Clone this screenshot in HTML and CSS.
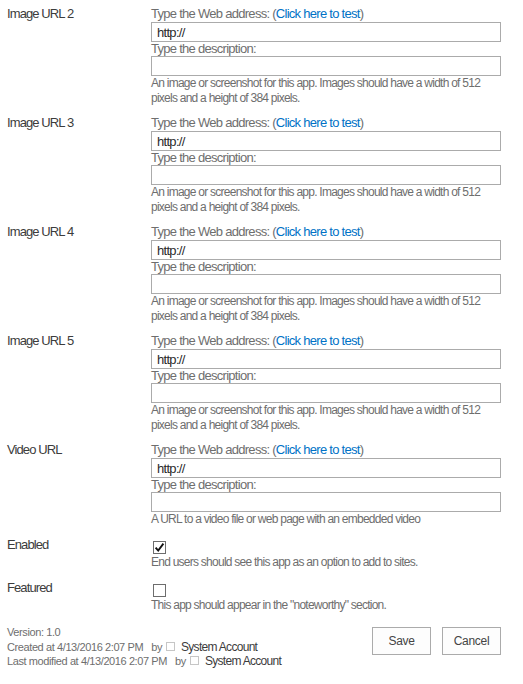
FILE: index.html
```html
<!DOCTYPE html>
<html>
<head>
<meta charset="utf-8">
<link rel="stylesheet" href="styles.css">
</head>
<body>
<div class="form">
  <div class="row">
    <div class="label">Image URL 2</div>
    <div class="field">
      <div class="cap">Type the Web address: (<a class="link" href="#">Click here to test</a>)</div>
      <input class="box" type="text" value="http://">
      <div class="cap2">Type the description:</div>
      <input class="box" type="text" value="">
      <div class="help">An image or screenshot for this app. Images should have a width of 512 pixels and a height of 384 pixels.</div>
    </div>
  </div>
  <div class="row">
    <div class="label">Image URL 3</div>
    <div class="field">
      <div class="cap">Type the Web address: (<a class="link" href="#">Click here to test</a>)</div>
      <input class="box" type="text" value="http://">
      <div class="cap2">Type the description:</div>
      <input class="box" type="text" value="">
      <div class="help">An image or screenshot for this app. Images should have a width of 512 pixels and a height of 384 pixels.</div>
    </div>
  </div>
  <div class="row">
    <div class="label">Image URL 4</div>
    <div class="field">
      <div class="cap">Type the Web address: (<a class="link" href="#">Click here to test</a>)</div>
      <input class="box" type="text" value="http://">
      <div class="cap2">Type the description:</div>
      <input class="box" type="text" value="">
      <div class="help">An image or screenshot for this app. Images should have a width of 512 pixels and a height of 384 pixels.</div>
    </div>
  </div>
  <div class="row">
    <div class="label">Image URL 5</div>
    <div class="field">
      <div class="cap">Type the Web address: (<a class="link" href="#">Click here to test</a>)</div>
      <input class="box" type="text" value="http://">
      <div class="cap2">Type the description:</div>
      <input class="box" type="text" value="">
      <div class="help">An image or screenshot for this app. Images should have a width of 512 pixels and a height of 384 pixels.</div>
    </div>
  </div>
  <div class="row">
    <div class="label">Video URL</div>
    <div class="field">
      <div class="cap">Type the Web address: (<a class="link" href="#">Click here to test</a>)</div>
      <input class="box" type="text" value="http://">
      <div class="cap2">Type the description:</div>
      <input class="box" type="text" value="">
      <div class="help">A URL to a video file or web page with an embedded video</div>
    </div>
  </div>
  <div class="row row-check">
    <div class="label">Enabled</div>
    <div class="field">
      <div class="check-line">
        <svg class="cb" width="13" height="13" viewBox="0 0 13 13"><rect x="0.5" y="0.5" width="12" height="12" fill="#fff" stroke="#6d6d6d"/><path d="M2.6 6.6 L5.2 9.6 L10.4 2.6" fill="none" stroke="#111" stroke-width="1.9"/></svg>
      </div>
      <div class="help">End users should see this app as an option to add to sites.</div>
    </div>
  </div>
  <div class="row row-check">
    <div class="label">Featured</div>
    <div class="field">
      <div class="check-line">
        <svg class="cb" width="13" height="13" viewBox="0 0 13 13"><rect x="0.5" y="0.5" width="12" height="12" fill="#fff" stroke="#6d6d6d"/></svg>
      </div>
      <div class="help">This app should appear in the "noteworthy" section.</div>
    </div>
  </div>
  <div class="footer">
    <div class="meta">
      <div>Version: 1.0</div>
      <div>Created at 4/13/2016 2:07 PM<span class="by">by</span><span class="presence"></span><span class="user">System Account</span></div>
      <div>Last modified at 4/13/2016 2:07 PM<span class="by">by</span><span class="presence"></span><span class="user">System Account</span></div>
    </div>
    <div class="buttons">
      <button class="btn" type="button">Save</button>
      <button class="btn" type="button">Cancel</button>
    </div>
  </div>
</div>
</body>
</html>
```
FILE: styles.css
```css
html, body {
  margin: 0;
  padding: 0;
  background: #fff;
}
body {
  font-family: "Liberation Sans", Arial, sans-serif;
  color: #444;
}
.form {
  padding-left: 7px;
  width: 494px;
}
.row {
  display: grid;
  grid-template-columns: 144px 350px;
  padding-top: 6px;
  padding-bottom: 3px;
}
.label {
  font-size: 13px;
  line-height: 16px;
  letter-spacing: -0.9px;
  color: #3c3c3c;
}
.field {
  display: flex;
  flex-direction: column;
}
.cap {
  font-size: 13px;
  line-height: 16px;
  letter-spacing: -0.72px;
  color: #6e6e6e;
}
.cap2 {
  font-size: 13px;
  line-height: 14px;
  letter-spacing: -0.72px;
  color: #6e6e6e;
}
.link {
  color: #0072c6;
  text-decoration: none;
}
.box {
  box-sizing: border-box;
  width: 100%;
  height: 20px;
  margin: 0;
  border: 1px solid #ababab;
  padding: 0 5px;
  font-family: "Liberation Sans", Arial, sans-serif;
  font-size: 13px;
  letter-spacing: -0.7px;
  color: #2a2a2a;
  background: #fff;
  outline: none;
}
.help {
  font-size: 12px;
  line-height: 15px;
  letter-spacing: -0.75px;
  color: #6e6e6e;
}
.row-check {
  padding-top: 7px;
}
.check-line {
  height: 18px;
  display: flex;
  align-items: flex-start;
}
.cb {
  display: block;
  margin-top: 4px;
  margin-left: 2px;
}
.footer {
  display: flex;
  justify-content: space-between;
  align-items: flex-start;
  padding-top: 9px;
}
.meta {
  font-size: 11px;
  line-height: 14.5px;
  letter-spacing: -0.4px;
  color: #6e6e6e;
  white-space: nowrap;
}
.by {
  margin-left: 8px;
}
.presence {
  display: inline-block;
  width: 7px;
  height: 7px;
  border: 1px solid #c6c6c6;
  margin: 0 6px 0 4px;
  vertical-align: 0;
}
.user {
  font-size: 12px;
  color: #3c3c3c;
  letter-spacing: -0.7px;
}
.buttons {
  display: flex;
  gap: 11px;
  margin-top: 2px;
}
.btn {
  box-sizing: border-box;
  width: 59px;
  height: 28px;
  margin: 0;
  padding: 0;
  border: 1px solid #ababab;
  background: #fdfdfd;
  font-family: "Liberation Sans", Arial, sans-serif;
  font-size: 12px;
  letter-spacing: -0.3px;
  color: #444;
}
```
